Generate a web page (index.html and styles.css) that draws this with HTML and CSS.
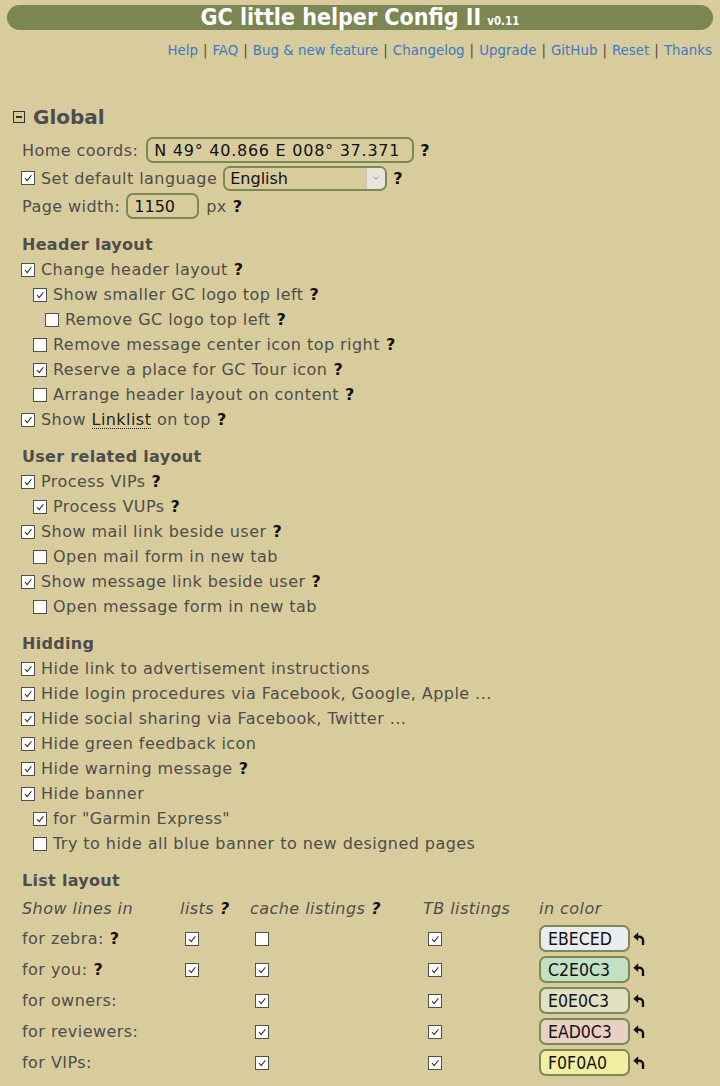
FILE: index.html
```html
<!DOCTYPE html>
<html lang="en">
<head>
<meta charset="utf-8">
<title>GC little helper Config II</title>
<link rel="stylesheet" href="styles.css">
</head>
<body>
<div class="titlebar"><span class="title">GC little helper Config II</span><span class="ver">v0.11</span></div>
<nav class="links">
  <a href="#">Help</a><span class="sep">|</span><a href="#">FAQ</a><span class="sep">|</span><a href="#">Bug &amp; new feature</a><span class="sep">|</span><a href="#">Changelog</a><span class="sep">|</span><a href="#">Upgrade</a><span class="sep">|</span><a href="#">GitHub</a><span class="sep">|</span><a href="#">Reset</a><span class="sep">|</span><a href="#">Thanks</a>
</nav>

<main class="content">
  <h2 class="sec-h"><span class="toggle"></span>Global</h2>
  <div class="field">Home coords:<input class="inp inp-coords" type="text" value="N 49° 40.866 E 008° 37.371"><b class="q">?</b></div>
  <div class="field field-cb"><span class="cb on"><svg viewBox="0 0 14 14"><path d="M3.5 7 L6 10 L11 3.8"/></svg></span>Set default language<span class="sel"><span class="sel-v">English</span><span class="sel-a"><svg viewBox="0 0 10 10"><path d="M2.5 3.8 L5 6.3 L7.5 3.8"/></svg></span></span><b class="q">?</b></div>
  <div class="field">Page width:<input class="inp inp-pw" type="text" value="1150"><span class="unit">px</span><b class="q">?</b></div>

  <h3 class="sub-h">Header layout</h3>
  <div class="row l0"><span class="cb on"><svg viewBox="0 0 14 14"><path d="M3.5 7 L6 10 L11 3.8"/></svg></span>Change header layout<b class="q">?</b></div>
  <div class="row l1"><span class="cb on"><svg viewBox="0 0 14 14"><path d="M3.5 7 L6 10 L11 3.8"/></svg></span>Show smaller GC logo top left<b class="q">?</b></div>
  <div class="row l2"><span class="cb"></span>Remove GC logo top left<b class="q">?</b></div>
  <div class="row l1"><span class="cb"></span>Remove message center icon top right<b class="q">?</b></div>
  <div class="row l1"><span class="cb on"><svg viewBox="0 0 14 14"><path d="M3.5 7 L6 10 L11 3.8"/></svg></span>Reserve a place for GC Tour icon<b class="q">?</b></div>
  <div class="row l1"><span class="cb"></span>Arrange header layout on content<b class="q">?</b></div>
  <div class="row l0"><span class="cb on"><svg viewBox="0 0 14 14"><path d="M3.5 7 L6 10 L11 3.8"/></svg></span>Show&nbsp;<abbr class="ll">Linklist</abbr>&nbsp;on top<b class="q">?</b></div>

  <h3 class="sub-h">User related layout</h3>
  <div class="row l0"><span class="cb on"><svg viewBox="0 0 14 14"><path d="M3.5 7 L6 10 L11 3.8"/></svg></span>Process VIPs<b class="q">?</b></div>
  <div class="row l1"><span class="cb on"><svg viewBox="0 0 14 14"><path d="M3.5 7 L6 10 L11 3.8"/></svg></span>Process VUPs<b class="q">?</b></div>
  <div class="row l0"><span class="cb on"><svg viewBox="0 0 14 14"><path d="M3.5 7 L6 10 L11 3.8"/></svg></span>Show mail link beside user<b class="q">?</b></div>
  <div class="row l1"><span class="cb"></span>Open mail form in new tab</div>
  <div class="row l0"><span class="cb on"><svg viewBox="0 0 14 14"><path d="M3.5 7 L6 10 L11 3.8"/></svg></span>Show message link beside user<b class="q">?</b></div>
  <div class="row l1"><span class="cb"></span>Open message form in new tab</div>

  <h3 class="sub-h">Hidding</h3>
  <div class="row l0"><span class="cb on"><svg viewBox="0 0 14 14"><path d="M3.5 7 L6 10 L11 3.8"/></svg></span>Hide link to advertisement instructions</div>
  <div class="row l0"><span class="cb on"><svg viewBox="0 0 14 14"><path d="M3.5 7 L6 10 L11 3.8"/></svg></span>Hide login procedures via Facebook, Google, Apple ...</div>
  <div class="row l0"><span class="cb on"><svg viewBox="0 0 14 14"><path d="M3.5 7 L6 10 L11 3.8"/></svg></span>Hide social sharing via Facebook, Twitter ...</div>
  <div class="row l0"><span class="cb on"><svg viewBox="0 0 14 14"><path d="M3.5 7 L6 10 L11 3.8"/></svg></span>Hide green feedback icon</div>
  <div class="row l0"><span class="cb on"><svg viewBox="0 0 14 14"><path d="M3.5 7 L6 10 L11 3.8"/></svg></span>Hide warning message<b class="q">?</b></div>
  <div class="row l0"><span class="cb on"><svg viewBox="0 0 14 14"><path d="M3.5 7 L6 10 L11 3.8"/></svg></span>Hide banner</div>
  <div class="row l1"><span class="cb on"><svg viewBox="0 0 14 14"><path d="M3.5 7 L6 10 L11 3.8"/></svg></span>for "Garmin Express"</div>
  <div class="row l1"><span class="cb"></span>Try to hide all blue banner to new designed pages</div>

  <h3 class="sub-h">List layout</h3>
  <div class="tbl">
    <div class="th">Show lines in</div>
    <div class="th">lists<b class="q">?</b></div>
    <div class="th">cache listings<b class="q">?</b></div>
    <div class="th">TB listings</div>
    <div class="th">in color</div>

    <div class="td">for zebra:<b class="q">?</b></div>
    <div class="td"><span class="cb on"><svg viewBox="0 0 14 14"><path d="M3.5 7 L6 10 L11 3.8"/></svg></span></div>
    <div class="td"><span class="cb"></span></div>
    <div class="td"><span class="cb on"><svg viewBox="0 0 14 14"><path d="M3.5 7 L6 10 L11 3.8"/></svg></span></div>
    <div class="td"><input class="inp color" type="text" value="EBECED" style="background:#ebeced"><svg class="undo" viewBox="0 0 12 14"><path class="uh" d="M0.3 5.2 L5.2 0.8 L5.2 9.6 Z"/><path class="us" d="M4.5 5.2 H6.4 A3.6 3.6 0 0 1 10 8.8 V13.5"/></svg></div>

    <div class="td">for you:<b class="q">?</b></div>
    <div class="td"><span class="cb on"><svg viewBox="0 0 14 14"><path d="M3.5 7 L6 10 L11 3.8"/></svg></span></div>
    <div class="td"><span class="cb on"><svg viewBox="0 0 14 14"><path d="M3.5 7 L6 10 L11 3.8"/></svg></span></div>
    <div class="td"><span class="cb on"><svg viewBox="0 0 14 14"><path d="M3.5 7 L6 10 L11 3.8"/></svg></span></div>
    <div class="td"><input class="inp color" type="text" value="C2E0C3" style="background:#c2e0c3"><svg class="undo" viewBox="0 0 12 14"><path class="uh" d="M0.3 5.2 L5.2 0.8 L5.2 9.6 Z"/><path class="us" d="M4.5 5.2 H6.4 A3.6 3.6 0 0 1 10 8.8 V13.5"/></svg></div>

    <div class="td">for owners:</div>
    <div class="td"></div>
    <div class="td"><span class="cb on"><svg viewBox="0 0 14 14"><path d="M3.5 7 L6 10 L11 3.8"/></svg></span></div>
    <div class="td"><span class="cb on"><svg viewBox="0 0 14 14"><path d="M3.5 7 L6 10 L11 3.8"/></svg></span></div>
    <div class="td"><input class="inp color" type="text" value="E0E0C3" style="background:#e0e0c3"><svg class="undo" viewBox="0 0 12 14"><path class="uh" d="M0.3 5.2 L5.2 0.8 L5.2 9.6 Z"/><path class="us" d="M4.5 5.2 H6.4 A3.6 3.6 0 0 1 10 8.8 V13.5"/></svg></div>

    <div class="td">for reviewers:</div>
    <div class="td"></div>
    <div class="td"><span class="cb on"><svg viewBox="0 0 14 14"><path d="M3.5 7 L6 10 L11 3.8"/></svg></span></div>
    <div class="td"><span class="cb on"><svg viewBox="0 0 14 14"><path d="M3.5 7 L6 10 L11 3.8"/></svg></span></div>
    <div class="td"><input class="inp color" type="text" value="EAD0C3" style="background:#ead0c3"><svg class="undo" viewBox="0 0 12 14"><path class="uh" d="M0.3 5.2 L5.2 0.8 L5.2 9.6 Z"/><path class="us" d="M4.5 5.2 H6.4 A3.6 3.6 0 0 1 10 8.8 V13.5"/></svg></div>

    <div class="td">for VIPs:</div>
    <div class="td"></div>
    <div class="td"><span class="cb on"><svg viewBox="0 0 14 14"><path d="M3.5 7 L6 10 L11 3.8"/></svg></span></div>
    <div class="td"><span class="cb on"><svg viewBox="0 0 14 14"><path d="M3.5 7 L6 10 L11 3.8"/></svg></span></div>
    <div class="td"><input class="inp color" type="text" value="F0F0A0" style="background:#f0f0a0"><svg class="undo" viewBox="0 0 12 14"><path class="uh" d="M0.3 5.2 L5.2 0.8 L5.2 9.6 Z"/><path class="us" d="M4.5 5.2 H6.4 A3.6 3.6 0 0 1 10 8.8 V13.5"/></svg></div>
  </div>
</main>
</body>
</html>
```

FILE: styles.css
```css
html, body {
  margin: 0;
  padding: 0;
}
body {
  background: #d8cc9c;
  font-family: "DejaVu Sans", Verdana, sans-serif;
  font-size: 16px;
  letter-spacing: 0.45px;
  color: #4d4d4d;
  overflow: hidden;
}

.titlebar {
  margin: 5px 7px 0 7px;
  height: 25px;
  border-radius: 13px;
  background: #7b8653;
  color: #fff;
  text-align: center;
  line-height: 25px;
  font-family: "DejaVu Sans Condensed", "DejaVu Sans", sans-serif;
  font-stretch: condensed;
  font-weight: bold;
  letter-spacing: 0;
}
.title {
  font-size: 23px;
}
.ver {
  font-size: 11.5px;
  margin-left: 6px;
}

.links {
  margin-top: 12px;
  padding-right: 8px;
  text-align: right;
  line-height: 16px;
  font-family: "DejaVu Sans Condensed", "DejaVu Sans", sans-serif;
  font-stretch: condensed;
  font-size: 14.8px;
  letter-spacing: 0.05px;
}
.links a {
  color: #3b79c6;
  text-decoration: none;
}
.links .sep {
  color: #4d4d4d;
  margin: 0 5px;
}

.sec-h {
  margin: 47px 0 7px 13px;
  height: 24px;
  line-height: 24px;
  font-size: 20px;
  font-weight: bold;
  letter-spacing: 0;
  display: flex;
  align-items: center;
}
.toggle {
  box-sizing: border-box;
  width: 12px;
  height: 12px;
  border: 1.5px solid #333;
  margin-right: 8px;
  display: inline-flex;
  align-items: center;
  justify-content: center;
}
.toggle::after {
  content: "";
  width: 6px;
  height: 1.5px;
  background: #333;
}

.sub-h {
  margin: 12px 0 0 22px;
  height: 25px;
  line-height: 25px;
  font-size: 16px;
  font-weight: bold;
  letter-spacing: 0.3px;
}

.field {
  height: 28px;
  display: flex;
  align-items: center;
  padding-left: 22px;
  white-space: nowrap;
}
.field-cb {
  padding-left: 21px;
}

.row {
  height: 25px;
  display: flex;
  align-items: center;
  white-space: nowrap;
}
.l0 { padding-left: 21px; }
.l1 { padding-left: 33px; }
.l2 { padding-left: 45px; }

.cb {
  box-sizing: border-box;
  width: 14px;
  height: 14px;
  border: 1px solid #505050;
  background: #fff;
  margin-right: 6px;
  display: inline-block;
  flex: none;
}
.cb svg {
  display: block;
  width: 12px;
  height: 12px;
}
.cb svg path {
  fill: none;
  stroke: #2a2a2a;
  stroke-width: 1.3;
}

.q {
  color: #111;
  font-weight: bold;
  margin-left: 6px;
  letter-spacing: 0;
}

.ll {
  color: #222;
  text-decoration: none;
  border-bottom: 1px dotted #222;
  line-height: 17px;
}

.inp {
  box-sizing: border-box;
  height: 26px;
  border: 2px solid #7b8a55;
  border-radius: 7px;
  background: transparent;
  font-family: "DejaVu Sans", Verdana, sans-serif;
  font-size: 16px;
  color: #111;
  padding: 0 6px;
  outline: none;
}
.inp-coords {
  width: 268px;
  margin-left: 8px;
  letter-spacing: 0.75px;
}
.inp-pw {
  width: 73px;
  margin-left: 6px;
}
.unit {
  margin-left: 7px;
}

.sel {
  box-sizing: border-box;
  height: 25px;
  width: 164px;
  margin-left: 6px;
  border: 2px solid #7b8a55;
  border-radius: 7px;
  display: inline-flex;
  align-items: stretch;
  overflow: hidden;
}
.sel-v {
  flex: 1;
  color: #111;
  padding-left: 5px;
  line-height: 21px;
  letter-spacing: 0;
}
.sel-a {
  width: 18px;
  background: #e6e4dc;
  border-left: 1px solid #c8c6bc;
  display: flex;
  align-items: center;
  justify-content: center;
}
.sel-a svg {
  width: 10px;
  height: 10px;
}
.sel-a svg path {
  fill: none;
  stroke: #888;
  stroke-width: 1;
}

.tbl {
  display: grid;
  grid-template-columns: 158px 70px 173px 116px 1fr;
  grid-auto-rows: 31px;
  grid-template-rows: 30px;
  padding-left: 22px;
  align-items: center;
}
.th {
  font-style: italic;
  white-space: nowrap;
}
.td {
  display: flex;
  align-items: center;
  white-space: nowrap;
}
.td .cb {
  margin-left: 5px;
}
.inp.color {
  width: 91px;
  height: 27px;
  font-family: "DejaVu Sans Condensed", "DejaVu Sans", sans-serif;
  font-stretch: condensed;
  font-size: 17.5px;
  letter-spacing: 0;
  padding-left: 7px;
}
.undo {
  width: 12px;
  height: 15px;
  margin-left: 3px;
}
.undo .uh {
  fill: #111;
}
.undo .us {
  fill: none;
  stroke: #111;
  stroke-width: 2.4;
}
```
